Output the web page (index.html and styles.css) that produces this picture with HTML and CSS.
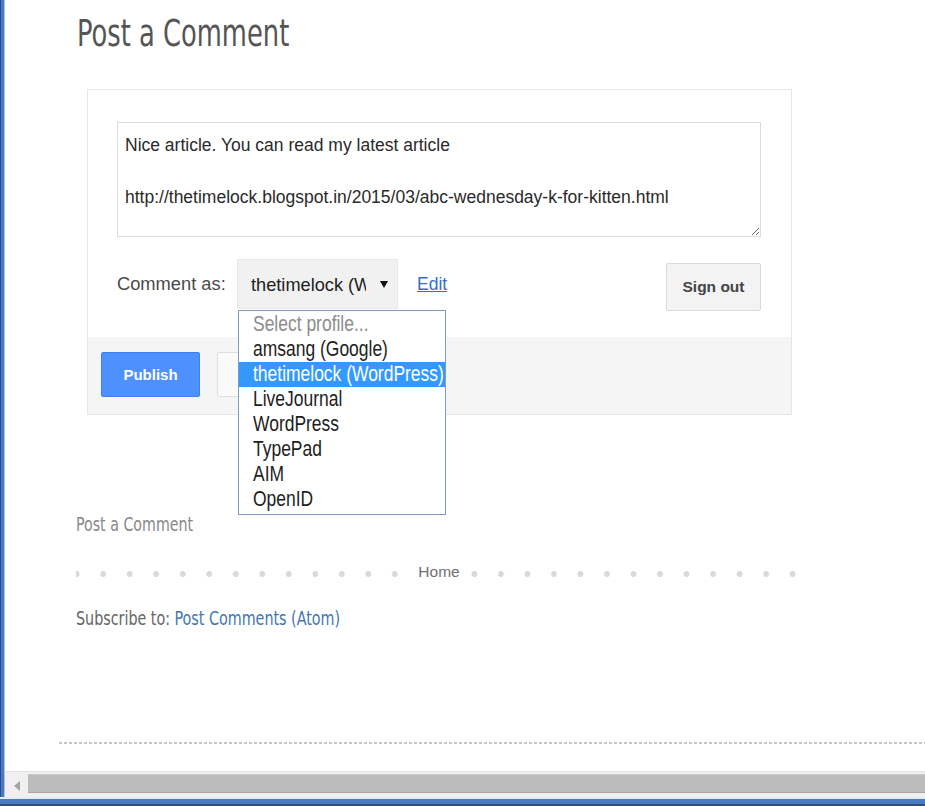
FILE: index.html
```html
<!DOCTYPE html>
<html lang="en">
<head>
<meta charset="utf-8">
<title>Post a Comment</title>
<link rel="stylesheet" href="styles.css">
</head>
<body>
<div class="window">
  <div class="win-body">
    <div class="edge-left"></div>
    <div class="viewport">
      <main class="page">
        <h2 class="title">Post a Comment</h2>
        <div class="comment-box">
          <div class="form-top">
            <textarea class="comment-text">Nice article. You can read my latest article

http://thetimelock.blogspot.in/2015/03/abc-wednesday-k-for-kitten.html</textarea>
            <div class="identity-row">
              <span class="label">Comment as:</span>
              <div class="select">
                <span class="select-value">thetimelock (W</span>
                <span class="select-arrow"></span>
                <ul class="dropdown">
                  <li class="opt placeholder"><span class="opt-text">Select profile...</span></li>
                  <li class="opt"><span class="opt-text">amsang (Google)</span></li>
                  <li class="opt selected"><span class="opt-text">thetimelock (WordPress)</span></li>
                  <li class="opt"><span class="opt-text">LiveJournal</span></li>
                  <li class="opt"><span class="opt-text">WordPress</span></li>
                  <li class="opt"><span class="opt-text">TypePad</span></li>
                  <li class="opt"><span class="opt-text">AIM</span></li>
                  <li class="opt"><span class="opt-text">OpenID</span></li>
                </ul>
              </div>
              <a class="edit" href="#">Edit</a>
              <button class="btn signout">Sign out</button>
            </div>
          </div>
          <div class="form-actions">
            <button class="btn primary">Publish</button>
            <button class="btn preview"></button>
          </div>
        </div>
        <a class="post-link" href="#">Post a Comment</a>
        <div class="pager"><span class="home">Home</span></div>
        <div class="subscribe">Subscribe to: <a href="#">Post Comments (Atom)</a></div>
        <div class="dash"></div>
      </main>
      <div class="hscroll">
        <span class="arrow-left"></span>
        <div class="thumb"></div>
      </div>
    </div>
  </div>
  <div class="edge-bottom"></div>
</div>
</body>
</html>
```

FILE: styles.css
```css
html, body {
  margin: 0;
  padding: 0;
  background: #ffffff;
  overflow: hidden;
}

.window {
  width: 925px;
  height: 806px;
  display: flex;
  flex-direction: column;
}

.win-body {
  flex: 1;
  display: flex;
  min-height: 0;
}

.edge-left {
  width: 5px;
  background: linear-gradient(to right, #2d4c80 0 1px, #4a7ac2 1px 4px, #a9c0e3 4px 5px);
}

.edge-bottom {
  height: 9px;
  background: linear-gradient(to bottom, #e6ecf6 0 2px, #4a7ac2 2px 7px, #2d4c80 7px 9px);
}

.viewport {
  flex: 1;
  display: flex;
  flex-direction: column;
  min-width: 0;
}

.page {
  flex: 1;
  overflow: hidden;
  padding-left: 72px;
  font-family: "Liberation Sans", Arial, sans-serif;
}

.title {
  margin: 12px 0 0 0;
  font-family: "DejaVu Sans Condensed", "DejaVu Sans", sans-serif;
  font-stretch: condensed;
  font-weight: normal;
  font-size: 36.5px;
  line-height: 44px;
  color: #555555;
  transform: scaleX(0.785);
  transform-origin: 0 0;
  white-space: nowrap;
}

.comment-box {
  margin: 33px 0 0 10px;
  width: 705px;
  box-sizing: border-box;
  border: 1px solid #e6e6e6;
}

.form-top {
  padding: 32px 30px 26px 29px;
  background: #ffffff;
}

.comment-text {
  display: block;
  width: 644px;
  height: 115px;
  box-sizing: border-box;
  margin: 0;
  border: 1px solid #dcdcdc;
  padding: 9px 7px;
  font-family: "Liberation Sans", Arial, sans-serif;
  font-size: 17.5px;
  line-height: 26px;
  color: #2a2a2a;
  outline: none;
  overflow: hidden;
}

.identity-row {
  margin-top: 22px;
  display: flex;
  align-items: flex-start;
  height: 52px;
}

.label {
  width: 120px;
  font-size: 18.3px;
  line-height: 50px;
  color: #4a4a4a;
  white-space: nowrap;
}

.select {
  position: relative;
  width: 161px;
  height: 50px;
  box-sizing: border-box;
  border: 1px solid #e8e8e8;
  background: #f1f1f1;
  padding-left: 13px;
  display: flex;
  align-items: center;
}

.select-value {
  width: 115px;
  overflow: hidden;
  white-space: nowrap;
  font-size: 18.2px;
  color: #222222;
  margin-top: 3px;
}

.select-arrow {
  width: 0;
  height: 0;
  margin-left: 14px;
  border-left: 4px solid transparent;
  border-right: 4px solid transparent;
  border-top: 7px solid #111111;
}

.dropdown {
  position: absolute;
  top: 50px;
  left: 0;
  z-index: 10;
  width: 208px;
  box-sizing: border-box;
  margin: 0;
  padding: 1px 0 2px 0;
  list-style: none;
  background: #ffffff;
  border: 1px solid #7f9db9;
}

.opt {
  height: 25px;
  line-height: 25px;
  padding-left: 14px;
  font-family: "Liberation Sans", Arial, sans-serif;
  font-size: 21.3px;
  color: #1e1e1e;
  white-space: nowrap;
}

.opt-text {
  display: inline-block;
  transform: scaleX(0.82);
  transform-origin: 0 50%;
}

.opt.placeholder {
  color: #8c8c8c;
}

.opt.selected {
  background: #3399ff;
  color: #ffffff;
}

.edit {
  margin-left: 19px;
  font-size: 17.5px;
  line-height: 50px;
  color: #3170c7;
  text-decoration: underline;
}

.btn {
  box-sizing: border-box;
  margin: 0;
  padding: 0;
  font-family: "Liberation Sans", Arial, sans-serif;
  font-weight: bold;
  border-radius: 2px;
}

.signout {
  margin-left: auto;
  margin-top: 4px;
  width: 95px;
  height: 48px;
  background: #f3f3f3;
  border: 1px solid #dadada;
  color: #444444;
  font-size: 15.5px;
}

.form-actions {
  background: #f5f5f5;
  padding: 15px 13px 17px 13px;
  display: flex;
}

.primary {
  width: 99px;
  height: 45px;
  background: #4d90fe;
  border: 1px solid #3b80ee;
  color: #ffffff;
  font-size: 15px;
}

.preview {
  margin-left: 17px;
  width: 95px;
  height: 45px;
  background: #fafafa;
  border: 1px solid #dddddd;
}

.post-link {
  display: block;
  margin-top: 99px;
  margin-left: -1px;
  font-family: "DejaVu Sans Condensed", "DejaVu Sans", sans-serif;
  font-stretch: condensed;
  font-size: 20px;
  line-height: 20px;
  color: #888888;
  text-decoration: none;
  transform: scaleX(0.79);
  transform-origin: 0 0;
  white-space: nowrap;
}

.pager {
  margin-top: 28px;
  margin-left: -1px;
  width: 721px;
  height: 20px;
  text-align: center;
  background-image: radial-gradient(circle, #d9d9d9 0 2.6px, transparent 3.3px);
  background-size: 26.53px 10px;
  background-position: -12.6px 7px;
  background-repeat: repeat-x;
}

.home {
  display: inline-block;
  padding: 0 10px 0 15px;
  background: #ffffff;
  font-size: 15.5px;
  line-height: 20px;
  color: #707070;
}

.subscribe {
  margin-top: 26px;
  margin-left: -1px;
  font-family: "DejaVu Sans Condensed", "DejaVu Sans", sans-serif;
  font-stretch: condensed;
  font-size: 20px;
  line-height: 20px;
  color: #666666;
  transform: scaleX(0.795);
  transform-origin: 0 0;
  white-space: nowrap;
}

.subscribe a {
  color: #4577b0;
  text-decoration: none;
}

.dash {
  margin-top: 114px;
  margin-left: -18px;
  height: 2px;
  background: repeating-linear-gradient(to right, #c6c6c6 0 3px, transparent 3px 5px);
}

.hscroll {
  height: 26px;
  box-sizing: border-box;
  padding-top: 2px;
  background: #f0f0f0;
  border-top: 1px solid #e2e2e2;
  display: flex;
  align-items: flex-start;
}

.arrow-left {
  width: 0;
  height: 0;
  margin: 7px 0 0 9px;
  border-top: 5px solid transparent;
  border-bottom: 5px solid transparent;
  border-right: 6px solid #a3a3a3;
}

.thumb {
  flex: 1;
  margin-left: 8px;
  height: 19px;
  box-sizing: border-box;
  background: #bcbcbc;
  border-top: 1px solid #c8c8c8;
  border-bottom: 1px solid #a6a6a6;
}
```
